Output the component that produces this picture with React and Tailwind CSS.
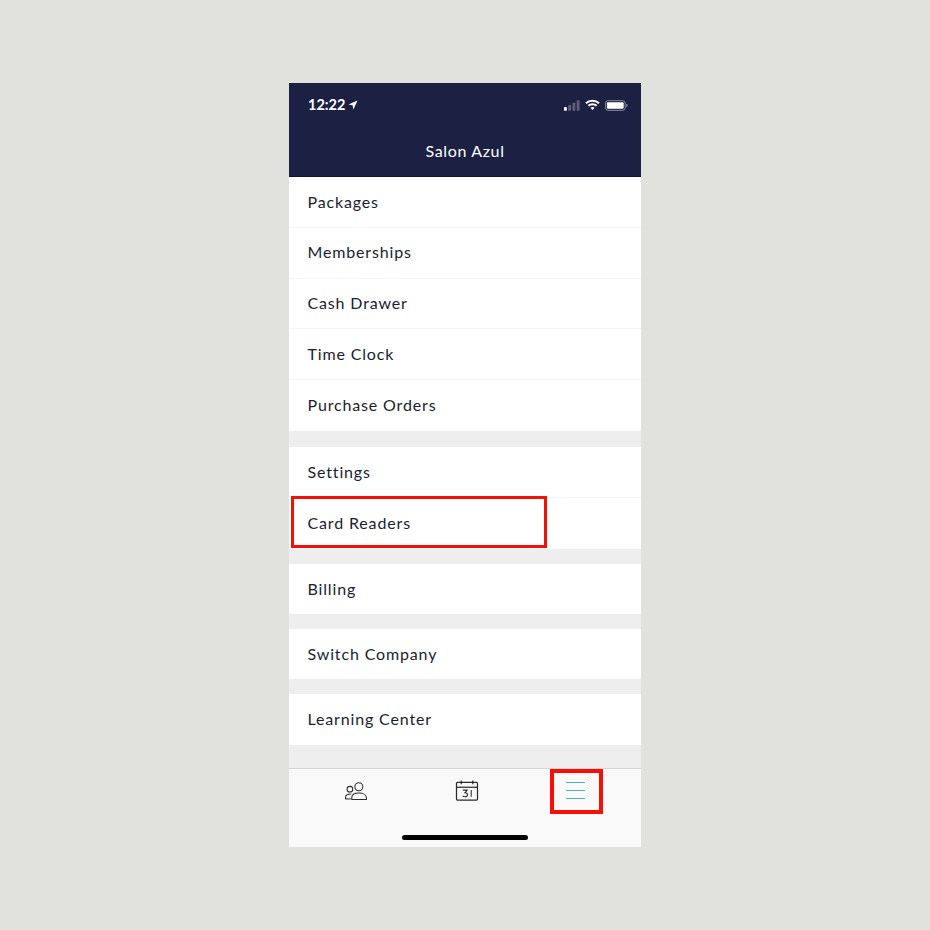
import React from "react";

const groups = [
  ["Packages", "Memberships", "Cash Drawer", "Time Clock", "Purchase Orders"],
  ["Settings", "Card Readers"],
  ["Billing"],
  ["Switch Company"],
  ["Learning Center"],
];

const StatusIcons = () => (
  <div className="flex items-center">
    <svg width="16" height="11" viewBox="0 0 17 11" className="mr-[5px]">
      <rect x="0" y="7" width="3" height="4" rx="0.5" fill="#ffffff" />
      <rect x="4.5" y="5" width="3" height="6" rx="0.5" fill="#5d6078" />
      <rect x="9" y="2.5" width="3" height="8.5" rx="0.5" fill="#5d6078" />
      <rect x="13.5" y="0" width="3" height="11" rx="0.5" fill="#5d6078" />
    </svg>
    <svg width="15" height="12" viewBox="0 0 16 12" className="mr-[5px]">
      <path d="M1 4.2C4.8 .6 11.2 .6 15 4.2" fill="none" stroke="#fff" strokeWidth="2.2" />
      <path d="M3.6 6.8C6 4.6 10 4.6 12.4 6.8" fill="none" stroke="#fff" strokeWidth="2.2" />
      <path d="M5.8 8.9L8 11.2L10.2 8.9C9 7.8 7 7.8 5.8 8.9Z" fill="#fff" />
    </svg>
    <svg width="23" height="11" viewBox="0 0 24 11">
      <rect x="0.5" y="0.5" width="20.5" height="10" rx="2.5" fill="none" stroke="#8d8fa1" />
      <rect x="2" y="2" width="17.5" height="7" rx="1.2" fill="#fff" />
      <path d="M22.2 3.8C23.2 4.1 23.6 4.7 23.6 5.5C23.6 6.3 23.2 6.9 22.2 7.2Z" fill="#8d8fa1" />
    </svg>
  </div>
);

const PeopleIcon = () => (
  <svg width="24" height="19" viewBox="0 0 24 20" fill="none" stroke="#2b2b2b" strokeWidth="1.1">
    <circle cx="15" cy="5" r="4.2" />
    <path d="M7.5 18.5V16.8C7.5 13.6 10.5 11.6 15 11.6C19.5 11.6 23 13.6 23 16.8V18.5Z" strokeLinejoin="round" />
    <circle cx="5.6" cy="7.6" r="3" />
    <path d="M1 17.5V16.2C1 14 2.8 12.6 6.4 12.6" strokeLinecap="round" />
    <path d="M1 17.8H6.5" />
  </svg>
);

const CalendarIcon = () => (
  <svg width="24" height="21" viewBox="0 0 24 22" fill="none" stroke="#2b2b2b" strokeWidth="1.3">
    <rect x="1" y="2.6" width="22" height="18.4" rx="1" />
    <path d="M1 7.6H23" />
    <path d="M6 0.6V4.4M18 0.6V4.4" />
    <path d="M7.6 10.6H12.2L9.8 13.4C11.6 13.4 12.5 14.2 12.5 15.4C12.5 16.8 11.3 17.6 9.8 17.6C8.8 17.6 8 17.2 7.4 16.6" strokeWidth="1.1" />
    <path d="M16.4 10.6V17.6" strokeWidth="1.1" />
  </svg>
);

export default function App() {
  return (
    <div className="min-h-[930px] bg-[#e1e2dd] flex justify-center pt-[83px] font-['Lato','Noto_Sans',sans-serif]">
      <div className="relative w-[352px] h-[764px] flex flex-col bg-[#eeeeee]">
        <div className="h-[94px] shrink-0 bg-[#1c2143] border-b border-[#11142e] text-white">
          <div className="flex items-center justify-between pl-[19px] pr-[13px] pt-[13px] h-[31px]">
            <div className="flex items-center gap-[3px]">
              <span className="text-[14.5px] leading-[18px] font-bold">12:22</span>
              <svg width="10" height="10" viewBox="0 0 10 10">
                <path d="M9.5 .5L.5 4.6L4.6 5.3L5.4 9.5Z" fill="#fff" />
              </svg>
            </div>
            <StatusIcons />
          </div>
          <div className="text-center text-[16px] leading-[20px] mt-[27px] tracking-[0.65px]">Salon Azul</div>
        </div>

        <div className="flex-1 flex flex-col gap-[15px]">
          {groups.map((rows, i) => (
            <div key={rows[0]} className={i === 0 ? "bg-white flex flex-col mb-[1px]" : "bg-white flex flex-col"}>
              {rows.map((label) => (
                <div
                  key={label}
                  className={
                    rows.length > 1
                      ? "h-[50.8px] flex items-center pl-[18.5px] pb-[0.5px] text-[16px] tracking-[0.85px] text-[#1a1d30] border-b border-[#f5f5f5] last:border-b-0"
                      : "h-[50.4px] flex items-center pl-[18.5px] pb-[0.5px] text-[16px] tracking-[0.85px] text-[#1a1d30]"
                  }
                >
                  {label}
                </div>
              ))}
            </div>
          ))}
        </div>

        <div className="h-[79px] shrink-0 bg-[#f9f9f9] border-t border-[#d6d6d6]">
          <div className="grid grid-cols-3 h-[47px] pl-[13px] pr-[11px] pb-[4px] items-center">
            <div className="flex justify-center pr-[1px] pt-[2px]"><PeopleIcon /></div>
            <div className="flex justify-center pl-[2px]"><CalendarIcon /></div>
            <div className="flex justify-center pl-[1px]">
              <div className="w-[19px] flex flex-col gap-[6.5px]">
                <div className="h-[1.5px] bg-[#4fb0ac]" />
                <div className="h-[1.5px] bg-[#4fb0ac]" />
                <div className="h-[1.5px] bg-[#4fb0ac]" />
              </div>
            </div>
          </div>
          <div className="mt-[19px] mx-auto w-[126px] h-[5px] rounded-full bg-black" />
        </div>

        <div className="absolute left-[2px] top-[413px] w-[256px] h-[52px] border-[3px] border-[#f50f07]" />
        <div className="absolute left-[261px] top-[686px] w-[53px] h-[45px] border-[4px] border-[#f50f07]" />
      </div>
    </div>
  );
}
